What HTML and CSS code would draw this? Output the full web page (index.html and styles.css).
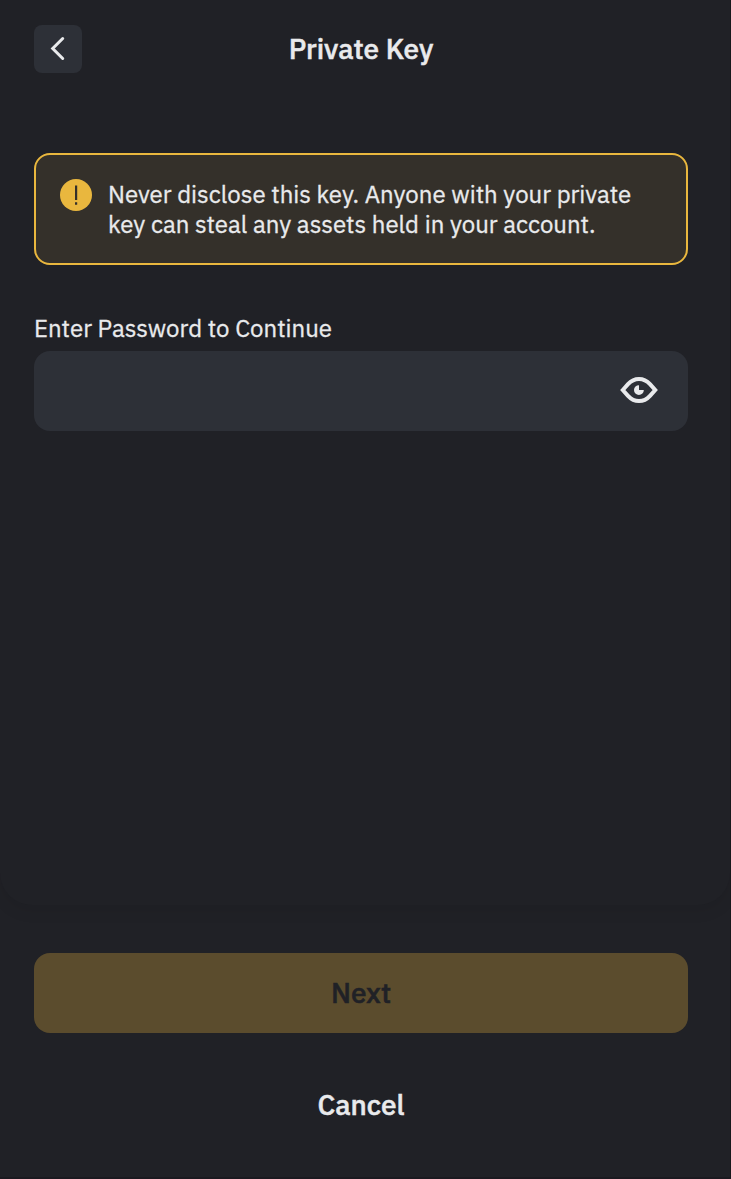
FILE: index.html
```html
<!DOCTYPE html>
<html lang="en">
<head>
<meta charset="utf-8">
<title>Private Key</title>
<link rel="stylesheet" href="styles.css">
</head>
<body>
<div class="screen">
  <main class="content">
    <header class="header">
      <button class="back" aria-label="Back">
        <svg width="48" height="48" viewBox="0 0 48 48"><path d="M28.700 13.500 18.700 23.500 28.700 33.500"/></svg>
      </button>
      <h1 class="title">Private Key</h1>
    </header>
    <section class="warning">
      <svg class="warning-icon" width="32" height="32" viewBox="0 0 32 32"><circle cx="16" cy="16" r="16"/><path d="M15 6.500h2.200v14.500h-2.200zM15 23.200h2.200v2.600h-2.200z"/></svg>
      <p class="warning-text">Never disclose this key. Anyone with your private<br>key can steal any assets held in your account.</p>
    </section>
    <label class="label" for="password">Enter Password to Continue</label>
    <div class="field">
      <input class="input" id="password" type="password">
      <svg class="eye" width="38" height="28" viewBox="0 0 38 28"><path class="lid" d="M2.800 14L8 8.200C11.300 4.600 15 3 19 3s7.700 1.600 11 5.200L35.200 14 30 19.800C26.700 23.400 23 25 19 25s-7.700-1.600-11-5.200Z"/><path class="pupil" d="M19 9.200V14h4.800A4.900 4.900 0 1 1 19 9.200Z"/></svg>
    </div>
  </main>
  <footer class="actions">
    <button class="button next">Next</button>
    <button class="button cancel">Cancel</button>
  </footer>
</div>
</body>
</html>
```
FILE: styles.css
```css
* { box-sizing: border-box; }
body { margin: 0; background: #202126; color: #e9eaec; font-family: "IBM Plex Sans", Roboto, sans-serif; }
button { border: 0; padding: 0; color: inherit; font: inherit; }
.screen { height: 1179px; display: flex; flex-direction: column; overflow: hidden; border-right: 1px solid #17181c; border-bottom: 2px solid #1b1a20; }
.content { height: 905px; flex: none; padding: 25px 42px 0 34px; border-radius: 0 0 32px 32px; background: #202126; box-shadow: 0 6px 16px rgba(0, 0, 0, .07); }
.header { display: grid; grid-template-columns: 48px 1fr 48px; height: 48px; align-items: center; }
.back { width: 48px; height: 48px; border-radius: 8px; background: #2d3037; }
.back svg { display: block; fill: none; stroke: #e9eaec; stroke-width: 3; stroke-linecap: round; stroke-linejoin: miter; }
.title { margin: 0; font-size: 28px; line-height: 36px; font-weight: 500; text-align: center; -webkit-text-stroke: .5px; }
.warning { display: flex; gap: 16px; height: 112px; margin-top: 80px; padding: 24px; border: 2px solid #e9b73e; border-radius: 16px; background: #34302a; }
.warning-icon { flex: none; fill: #e9b73e; }
.warning-icon path { fill: #34302a; }
.warning-text { margin: 0; font-size: 24px; line-height: 30px; letter-spacing: -.01px; white-space: nowrap; -webkit-text-stroke: .3px; }
.label { display: block; margin-top: 47px; font-size: 24px; line-height: 32px; -webkit-text-stroke: .3px; }
.field { display: flex; align-items: center; height: 80px; margin-top: 7px; padding-right: 30px; border-radius: 16px; background: #2d3037; }
.input { flex: 1; min-width: 0; height: 80px; padding: 0 24px; border: 0; outline: 0; background: transparent; color: inherit; font: inherit; font-size: 24px; }
.eye { flex: none; margin-bottom: 2px; fill: none; }
.lid { stroke: #e9eaec; stroke-width: 4; stroke-linejoin: miter; }
.pupil { fill: #e9eaec; }
.actions { padding: 48px 42px 0 34px; display: flex; flex-direction: column; gap: 32px; }
.button { height: 80px; border-radius: 16px; font-size: 28px; font-weight: 500; line-height: 36px; -webkit-text-stroke: .5px; }
.next { background: #5b4c2d; color: #202126; }
.cancel { background: transparent; }
```
